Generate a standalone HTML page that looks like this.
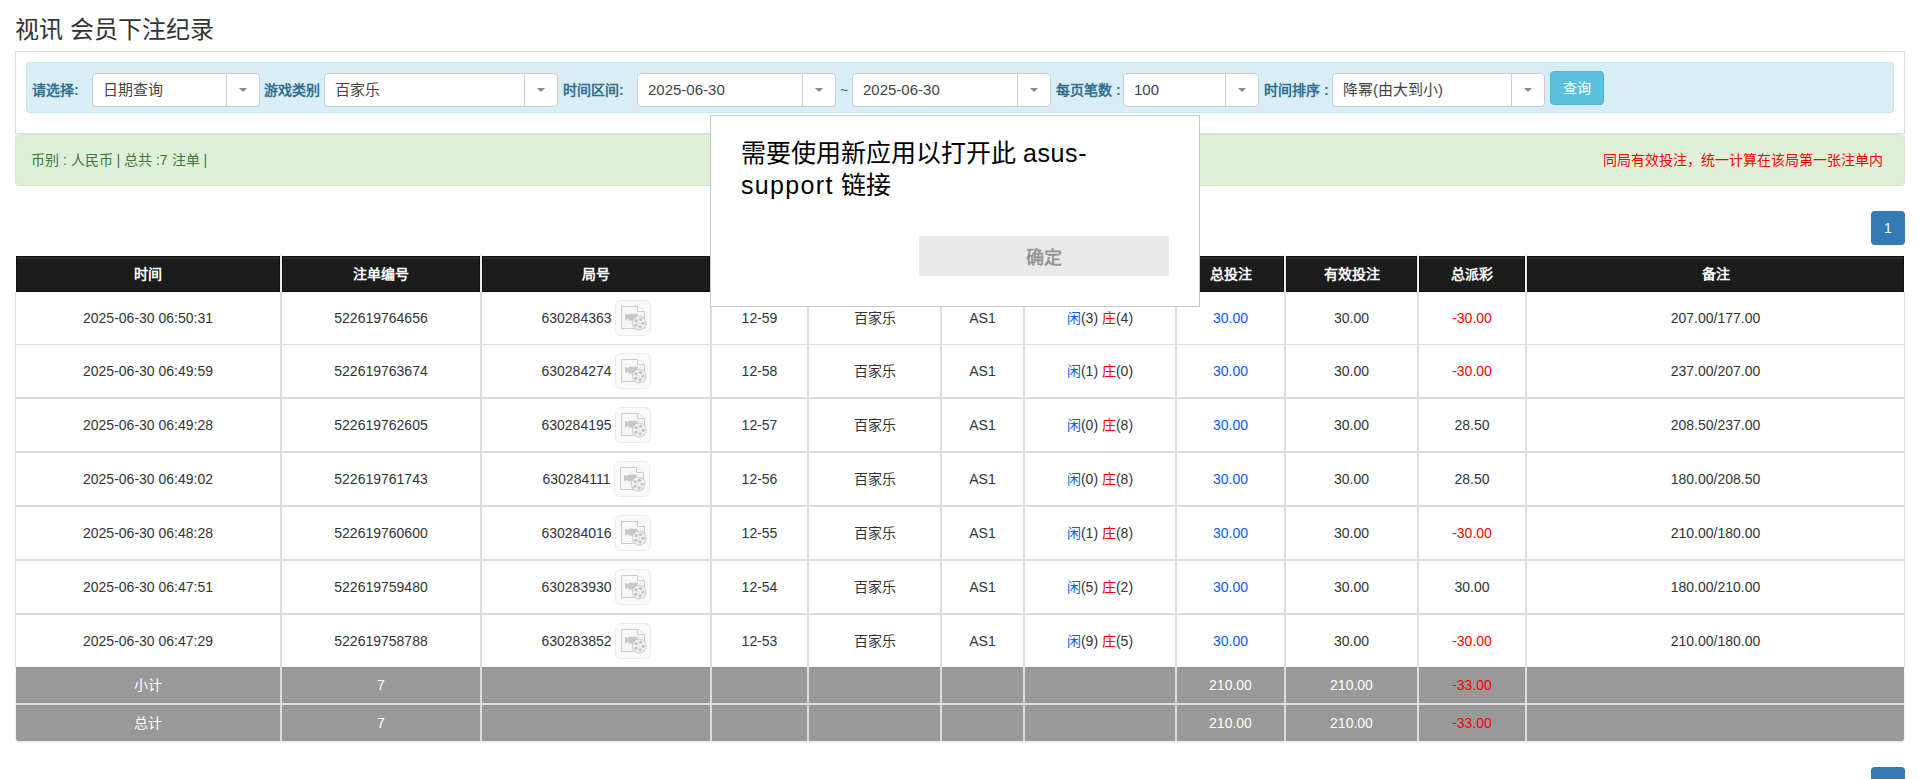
<!DOCTYPE html>
<html lang="zh-CN"><head><meta charset="utf-8"><title>视讯 会员下注纪录</title>
<style>
html,body{margin:0;padding:0;background:#fff;}
body{width:1919px;height:779px;position:relative;overflow:hidden;font-family:"Liberation Sans", sans-serif;}
</style></head><body>
<div style="position:absolute;left:15px;top:13px;width:400px;height:34px;line-height:34px;font-size:24px;color:#333;font-weight:normal;text-align:left;white-space:nowrap;">视讯 会员下注纪录</div>
<div style="position:absolute;left:15px;top:51px;width:1888px;height:81px;border:1px solid #ddd;background:#fff;"></div>
<div style="position:absolute;left:26px;top:62px;width:1866px;height:49px;border:1px solid #bce8f1;background:#d9edf7;border-radius:4px;"></div>
<div style="position:absolute;left:32px;top:80px;width:200px;height:20px;line-height:20px;font-size:14px;color:#31708f;font-weight:bold;text-align:left;white-space:nowrap;">请选择:</div>
<div style="position:absolute;left:92px;top:73px;width:166px;height:32px;border:1px solid #cccccc;background:#fff;border-radius:4px;"></div>
<div style="position:absolute;left:226px;top:74px;width:1px;height:32px;background:#cccccc;"></div>
<div style="position:absolute;left:239px;top:88px;width:0;height:0;border-style:solid;border-width:4px 4px 0 4px;border-color:#888 transparent transparent transparent;"></div>
<div style="position:absolute;left:103px;top:73px;width:128px;height:34px;line-height:34px;font-size:15px;color:#444;font-weight:normal;text-align:left;white-space:nowrap;">日期查询</div>
<div style="position:absolute;left:264px;top:80px;width:200px;height:20px;line-height:20px;font-size:14px;color:#31708f;font-weight:bold;text-align:left;white-space:nowrap;">游戏类别</div>
<div style="position:absolute;left:324px;top:73px;width:232px;height:32px;border:1px solid #cccccc;background:#fff;border-radius:4px;"></div>
<div style="position:absolute;left:524px;top:74px;width:1px;height:32px;background:#cccccc;"></div>
<div style="position:absolute;left:537px;top:88px;width:0;height:0;border-style:solid;border-width:4px 4px 0 4px;border-color:#888 transparent transparent transparent;"></div>
<div style="position:absolute;left:335px;top:73px;width:194px;height:34px;line-height:34px;font-size:15px;color:#444;font-weight:normal;text-align:left;white-space:nowrap;">百家乐</div>
<div style="position:absolute;left:563px;top:80px;width:200px;height:20px;line-height:20px;font-size:14px;color:#31708f;font-weight:bold;text-align:left;white-space:nowrap;">时间区间:</div>
<div style="position:absolute;left:637px;top:73px;width:197px;height:32px;border:1px solid #cccccc;background:#fff;border-radius:4px;"></div>
<div style="position:absolute;left:802px;top:74px;width:1px;height:32px;background:#cccccc;"></div>
<div style="position:absolute;left:815px;top:88px;width:0;height:0;border-style:solid;border-width:4px 4px 0 4px;border-color:#888 transparent transparent transparent;"></div>
<div style="position:absolute;left:648px;top:73px;width:159px;height:34px;line-height:34px;font-size:15px;color:#444;font-weight:normal;text-align:left;white-space:nowrap;">2025-06-30</div>
<div style="position:absolute;left:840px;top:80px;width:10px;height:20px;line-height:20px;font-size:14px;color:#31708f;font-weight:normal;text-align:left;white-space:nowrap;">~</div>
<div style="position:absolute;left:852px;top:73px;width:197px;height:32px;border:1px solid #cccccc;background:#fff;border-radius:4px;"></div>
<div style="position:absolute;left:1017px;top:74px;width:1px;height:32px;background:#cccccc;"></div>
<div style="position:absolute;left:1030px;top:88px;width:0;height:0;border-style:solid;border-width:4px 4px 0 4px;border-color:#888 transparent transparent transparent;"></div>
<div style="position:absolute;left:863px;top:73px;width:159px;height:34px;line-height:34px;font-size:15px;color:#444;font-weight:normal;text-align:left;white-space:nowrap;">2025-06-30</div>
<div style="position:absolute;left:1056px;top:80px;width:200px;height:20px;line-height:20px;font-size:14px;color:#31708f;font-weight:bold;text-align:left;white-space:nowrap;">每页笔数 :</div>
<div style="position:absolute;left:1123px;top:73px;width:134px;height:32px;border:1px solid #cccccc;background:#fff;border-radius:4px;"></div>
<div style="position:absolute;left:1225px;top:74px;width:1px;height:32px;background:#cccccc;"></div>
<div style="position:absolute;left:1238px;top:88px;width:0;height:0;border-style:solid;border-width:4px 4px 0 4px;border-color:#888 transparent transparent transparent;"></div>
<div style="position:absolute;left:1134px;top:73px;width:96px;height:34px;line-height:34px;font-size:15px;color:#444;font-weight:normal;text-align:left;white-space:nowrap;">100</div>
<div style="position:absolute;left:1264px;top:80px;width:200px;height:20px;line-height:20px;font-size:14px;color:#31708f;font-weight:bold;text-align:left;white-space:nowrap;">时间排序 :</div>
<div style="position:absolute;left:1332px;top:73px;width:211px;height:32px;border:1px solid #cccccc;background:#fff;border-radius:4px;"></div>
<div style="position:absolute;left:1511px;top:74px;width:1px;height:32px;background:#cccccc;"></div>
<div style="position:absolute;left:1524px;top:88px;width:0;height:0;border-style:solid;border-width:4px 4px 0 4px;border-color:#888 transparent transparent transparent;"></div>
<div style="position:absolute;left:1343px;top:73px;width:173px;height:34px;line-height:34px;font-size:15px;color:#444;font-weight:normal;text-align:left;white-space:nowrap;">降幂(由大到小)</div>
<div style="position:absolute;left:1550px;top:71px;width:52px;height:32px;border:1px solid #46b8da;background:#5bc0de;border-radius:4px;"></div>
<div style="position:absolute;left:1550px;top:71px;width:54px;height:34px;line-height:34px;font-size:14px;color:#fff;font-weight:normal;text-align:center;white-space:nowrap;">查询</div>
<div style="position:absolute;left:15px;top:134px;width:1888px;height:50px;border:1px solid #d6e9c6;background:#dff0d8;border-radius:4px;"></div>
<div style="position:absolute;left:31px;top:150px;width:400px;height:20px;line-height:20px;font-size:14px;color:#3c763d;font-weight:normal;text-align:left;white-space:nowrap;">币别 : 人民币 | 总共 :7 注单 |</div>
<div style="position:absolute;left:1400px;top:150px;width:1483px;height:20px;line-height:20px;font-size:14px;color:#f00;font-weight:normal;text-align:right;white-space:nowrap;width:483px;">同局有效投注，统一计算在该局第一张注单内</div>
<div style="position:absolute;left:1871px;top:211px;width:34px;height:34px;background:#337ab7;border-radius:4px;"></div>
<div style="position:absolute;left:1871px;top:211px;width:34px;height:34px;line-height:34px;font-size:14px;color:#fff;font-weight:normal;text-align:center;white-space:nowrap;">1</div>
<div style="position:absolute;left:1871px;top:767px;width:34px;height:34px;background:#337ab7;border-radius:4px;"></div>
<div style="position:absolute;left:1871px;top:767px;width:34px;height:34px;line-height:34px;font-size:14px;color:#fff;font-weight:normal;text-align:center;white-space:nowrap;">1</div>
<div style="position:absolute;left:16px;top:256px;width:264px;height:36px;background:#1c1c1c;"></div>
<div style="position:absolute;left:16px;top:257px;width:264px;height:2px;background:#262626;"></div>
<div style="position:absolute;left:16px;top:256px;width:264px;height:1px;background:#161616;"></div>
<div style="position:absolute;left:16px;top:291px;width:264px;height:1px;background:#111;"></div>
<div style="position:absolute;left:16px;top:256px;width:1px;height:36px;background:#121212;"></div>
<div style="position:absolute;left:279px;top:256px;width:1px;height:36px;background:#121212;"></div>
<div style="position:absolute;left:282px;top:256px;width:198px;height:36px;background:#1c1c1c;"></div>
<div style="position:absolute;left:282px;top:257px;width:198px;height:2px;background:#262626;"></div>
<div style="position:absolute;left:282px;top:256px;width:198px;height:1px;background:#161616;"></div>
<div style="position:absolute;left:282px;top:291px;width:198px;height:1px;background:#111;"></div>
<div style="position:absolute;left:282px;top:256px;width:1px;height:36px;background:#121212;"></div>
<div style="position:absolute;left:479px;top:256px;width:1px;height:36px;background:#121212;"></div>
<div style="position:absolute;left:482px;top:256px;width:228px;height:36px;background:#1c1c1c;"></div>
<div style="position:absolute;left:482px;top:257px;width:228px;height:2px;background:#262626;"></div>
<div style="position:absolute;left:482px;top:256px;width:228px;height:1px;background:#161616;"></div>
<div style="position:absolute;left:482px;top:291px;width:228px;height:1px;background:#111;"></div>
<div style="position:absolute;left:482px;top:256px;width:1px;height:36px;background:#121212;"></div>
<div style="position:absolute;left:709px;top:256px;width:1px;height:36px;background:#121212;"></div>
<div style="position:absolute;left:712px;top:256px;width:95px;height:36px;background:#1c1c1c;"></div>
<div style="position:absolute;left:712px;top:257px;width:95px;height:2px;background:#262626;"></div>
<div style="position:absolute;left:712px;top:256px;width:95px;height:1px;background:#161616;"></div>
<div style="position:absolute;left:712px;top:291px;width:95px;height:1px;background:#111;"></div>
<div style="position:absolute;left:712px;top:256px;width:1px;height:36px;background:#121212;"></div>
<div style="position:absolute;left:806px;top:256px;width:1px;height:36px;background:#121212;"></div>
<div style="position:absolute;left:809px;top:256px;width:131px;height:36px;background:#1c1c1c;"></div>
<div style="position:absolute;left:809px;top:257px;width:131px;height:2px;background:#262626;"></div>
<div style="position:absolute;left:809px;top:256px;width:131px;height:1px;background:#161616;"></div>
<div style="position:absolute;left:809px;top:291px;width:131px;height:1px;background:#111;"></div>
<div style="position:absolute;left:809px;top:256px;width:1px;height:36px;background:#121212;"></div>
<div style="position:absolute;left:939px;top:256px;width:1px;height:36px;background:#121212;"></div>
<div style="position:absolute;left:942px;top:256px;width:81px;height:36px;background:#1c1c1c;"></div>
<div style="position:absolute;left:942px;top:257px;width:81px;height:2px;background:#262626;"></div>
<div style="position:absolute;left:942px;top:256px;width:81px;height:1px;background:#161616;"></div>
<div style="position:absolute;left:942px;top:291px;width:81px;height:1px;background:#111;"></div>
<div style="position:absolute;left:942px;top:256px;width:1px;height:36px;background:#121212;"></div>
<div style="position:absolute;left:1022px;top:256px;width:1px;height:36px;background:#121212;"></div>
<div style="position:absolute;left:1025px;top:256px;width:150px;height:36px;background:#1c1c1c;"></div>
<div style="position:absolute;left:1025px;top:257px;width:150px;height:2px;background:#262626;"></div>
<div style="position:absolute;left:1025px;top:256px;width:150px;height:1px;background:#161616;"></div>
<div style="position:absolute;left:1025px;top:291px;width:150px;height:1px;background:#111;"></div>
<div style="position:absolute;left:1025px;top:256px;width:1px;height:36px;background:#121212;"></div>
<div style="position:absolute;left:1174px;top:256px;width:1px;height:36px;background:#121212;"></div>
<div style="position:absolute;left:1177px;top:256px;width:107px;height:36px;background:#1c1c1c;"></div>
<div style="position:absolute;left:1177px;top:257px;width:107px;height:2px;background:#262626;"></div>
<div style="position:absolute;left:1177px;top:256px;width:107px;height:1px;background:#161616;"></div>
<div style="position:absolute;left:1177px;top:291px;width:107px;height:1px;background:#111;"></div>
<div style="position:absolute;left:1177px;top:256px;width:1px;height:36px;background:#121212;"></div>
<div style="position:absolute;left:1283px;top:256px;width:1px;height:36px;background:#121212;"></div>
<div style="position:absolute;left:1286px;top:256px;width:131px;height:36px;background:#1c1c1c;"></div>
<div style="position:absolute;left:1286px;top:257px;width:131px;height:2px;background:#262626;"></div>
<div style="position:absolute;left:1286px;top:256px;width:131px;height:1px;background:#161616;"></div>
<div style="position:absolute;left:1286px;top:291px;width:131px;height:1px;background:#111;"></div>
<div style="position:absolute;left:1286px;top:256px;width:1px;height:36px;background:#121212;"></div>
<div style="position:absolute;left:1416px;top:256px;width:1px;height:36px;background:#121212;"></div>
<div style="position:absolute;left:1419px;top:256px;width:106px;height:36px;background:#1c1c1c;"></div>
<div style="position:absolute;left:1419px;top:257px;width:106px;height:2px;background:#262626;"></div>
<div style="position:absolute;left:1419px;top:256px;width:106px;height:1px;background:#161616;"></div>
<div style="position:absolute;left:1419px;top:291px;width:106px;height:1px;background:#111;"></div>
<div style="position:absolute;left:1419px;top:256px;width:1px;height:36px;background:#121212;"></div>
<div style="position:absolute;left:1524px;top:256px;width:1px;height:36px;background:#121212;"></div>
<div style="position:absolute;left:1527px;top:256px;width:377px;height:36px;background:#1c1c1c;"></div>
<div style="position:absolute;left:1527px;top:257px;width:377px;height:2px;background:#262626;"></div>
<div style="position:absolute;left:1527px;top:256px;width:377px;height:1px;background:#161616;"></div>
<div style="position:absolute;left:1527px;top:291px;width:377px;height:1px;background:#111;"></div>
<div style="position:absolute;left:1527px;top:256px;width:1px;height:36px;background:#121212;"></div>
<div style="position:absolute;left:1903px;top:256px;width:1px;height:36px;background:#121212;"></div>
<div style="position:absolute;left:16px;top:256px;width:264px;height:36px;line-height:36px;font-size:14px;color:#fff;font-weight:bold;text-align:center;white-space:nowrap;">时间</div>
<div style="position:absolute;left:282px;top:256px;width:198px;height:36px;line-height:36px;font-size:14px;color:#fff;font-weight:bold;text-align:center;white-space:nowrap;">注单编号</div>
<div style="position:absolute;left:482px;top:256px;width:228px;height:36px;line-height:36px;font-size:14px;color:#fff;font-weight:bold;text-align:center;white-space:nowrap;">局号</div>
<div style="position:absolute;left:712px;top:256px;width:95px;height:36px;line-height:36px;font-size:14px;color:#fff;font-weight:bold;text-align:center;white-space:nowrap;">场次</div>
<div style="position:absolute;left:809px;top:256px;width:131px;height:36px;line-height:36px;font-size:14px;color:#fff;font-weight:bold;text-align:center;white-space:nowrap;">游戏</div>
<div style="position:absolute;left:942px;top:256px;width:81px;height:36px;line-height:36px;font-size:14px;color:#fff;font-weight:bold;text-align:center;white-space:nowrap;">桌号</div>
<div style="position:absolute;left:1025px;top:256px;width:150px;height:36px;line-height:36px;font-size:14px;color:#fff;font-weight:bold;text-align:center;white-space:nowrap;">结果</div>
<div style="position:absolute;left:1177px;top:256px;width:107px;height:36px;line-height:36px;font-size:14px;color:#fff;font-weight:bold;text-align:center;white-space:nowrap;">总投注</div>
<div style="position:absolute;left:1286px;top:256px;width:131px;height:36px;line-height:36px;font-size:14px;color:#fff;font-weight:bold;text-align:center;white-space:nowrap;">有效投注</div>
<div style="position:absolute;left:1419px;top:256px;width:106px;height:36px;line-height:36px;font-size:14px;color:#fff;font-weight:bold;text-align:center;white-space:nowrap;">总派彩</div>
<div style="position:absolute;left:1527px;top:256px;width:377px;height:36px;line-height:36px;font-size:14px;color:#fff;font-weight:bold;text-align:center;white-space:nowrap;">备注</div>
<div style="position:absolute;left:280px;top:255px;width:2px;height:37px;background:#ececec;"></div>
<div style="position:absolute;left:480px;top:255px;width:2px;height:37px;background:#ececec;"></div>
<div style="position:absolute;left:710px;top:255px;width:2px;height:37px;background:#ececec;"></div>
<div style="position:absolute;left:807px;top:255px;width:2px;height:37px;background:#ececec;"></div>
<div style="position:absolute;left:940px;top:255px;width:2px;height:37px;background:#ececec;"></div>
<div style="position:absolute;left:1023px;top:255px;width:2px;height:37px;background:#ececec;"></div>
<div style="position:absolute;left:1175px;top:255px;width:2px;height:37px;background:#ececec;"></div>
<div style="position:absolute;left:1284px;top:255px;width:2px;height:37px;background:#ececec;"></div>
<div style="position:absolute;left:1417px;top:255px;width:2px;height:37px;background:#ececec;"></div>
<div style="position:absolute;left:1525px;top:255px;width:2px;height:37px;background:#ececec;"></div>
<div style="position:absolute;left:15px;top:292px;width:1890px;height:52px;background:#fff;"></div>
<div style="position:absolute;left:16px;top:292px;width:264px;height:52px;line-height:52px;font-size:14px;color:#333;font-weight:normal;text-align:center;white-space:nowrap;">2025-06-30 06:50:31</div>
<div style="position:absolute;left:282px;top:292px;width:198px;height:52px;line-height:52px;font-size:14px;color:#333;font-weight:normal;text-align:center;white-space:nowrap;">522619764656</div>
<div style="position:absolute;left:482px;top:292px;width:228px;height:52px;display:flex;align-items:center;justify-content:center;"><span style="font-size:14px;color:#333;line-height:20px">630284363</span><span style="display:inline-block;position:relative;width:36px;height:36px;margin-left:3px;top:0px"><svg width="36" height="36" viewBox="0 0 36 36" style="position:absolute;left:0;top:0"><rect x="0.5" y="0.5" width="35" height="35" rx="5" fill="#f9f9f9" stroke="#ebebeb"/><path d="M6.5 6.5 H22.5 L29.5 11.5 V28.5 H6.5 Z" fill="#f6f6f6" stroke="#cccccc"/><path d="M22.5 6.5 V11.5 H29.5" fill="#fdfdfd" stroke="#cccccc"/><path d="M10 13.8 V20.4 L13.5 18.6 V20.4 H22.7 V13.8 H13.5 V15.6 Z" fill="#c6c6c6"/><circle cx="24.2" cy="23.1" r="7" fill="#efefef" stroke="#cbcbcb"/><circle cx="25.53" cy="19.44" r="1.6" fill="#c4c4c4"/><circle cx="28.10" cy="23.24" r="1.6" fill="#c4c4c4"/><circle cx="25.27" cy="26.85" r="1.6" fill="#c4c4c4"/><circle cx="20.97" cy="25.28" r="1.6" fill="#c4c4c4"/><circle cx="21.13" cy="20.70" r="1.6" fill="#c4c4c4"/><circle cx="24.2" cy="23.1" r="0.6" fill="#c4c4c4"/></svg></span></div>
<div style="position:absolute;left:712px;top:292px;width:95px;height:52px;line-height:52px;font-size:14px;color:#333;font-weight:normal;text-align:center;white-space:nowrap;">12-59</div>
<div style="position:absolute;left:809px;top:292px;width:131px;height:52px;line-height:52px;font-size:14px;color:#333;font-weight:normal;text-align:center;white-space:nowrap;">百家乐</div>
<div style="position:absolute;left:942px;top:292px;width:81px;height:52px;line-height:52px;font-size:14px;color:#333;font-weight:normal;text-align:center;white-space:nowrap;">AS1</div>
<div style="position:absolute;left:1025px;top:292px;width:150px;height:52px;line-height:52px;font-size:14px;color:#333;font-weight:normal;text-align:center;white-space:nowrap;"><span style="color:#0060ff">闲</span>(3) <span style="color:#f00">庄</span>(4)</div>
<div style="position:absolute;left:1177px;top:292px;width:107px;height:52px;line-height:52px;font-size:14px;color:#0060ff;font-weight:normal;text-align:center;white-space:nowrap;">30.00</div>
<div style="position:absolute;left:1286px;top:292px;width:131px;height:52px;line-height:52px;font-size:14px;color:#333;font-weight:normal;text-align:center;white-space:nowrap;">30.00</div>
<div style="position:absolute;left:1419px;top:292px;width:106px;height:52px;line-height:52px;font-size:14px;color:#f00;font-weight:normal;text-align:center;white-space:nowrap;">-30.00</div>
<div style="position:absolute;left:1527px;top:292px;width:377px;height:52px;line-height:52px;font-size:14px;color:#333;font-weight:normal;text-align:center;white-space:nowrap;">207.00/177.00</div>
<div style="position:absolute;left:15px;top:344px;width:1890px;height:1px;background:#ddd;"></div>
<div style="position:absolute;left:280px;top:292px;width:2px;height:53px;background:#ddd;"></div>
<div style="position:absolute;left:480px;top:292px;width:2px;height:53px;background:#ddd;"></div>
<div style="position:absolute;left:710px;top:292px;width:2px;height:53px;background:#ddd;"></div>
<div style="position:absolute;left:807px;top:292px;width:2px;height:53px;background:#ddd;"></div>
<div style="position:absolute;left:940px;top:292px;width:2px;height:53px;background:#ddd;"></div>
<div style="position:absolute;left:1023px;top:292px;width:2px;height:53px;background:#ddd;"></div>
<div style="position:absolute;left:1175px;top:292px;width:2px;height:53px;background:#ddd;"></div>
<div style="position:absolute;left:1284px;top:292px;width:2px;height:53px;background:#ddd;"></div>
<div style="position:absolute;left:1417px;top:292px;width:2px;height:53px;background:#ddd;"></div>
<div style="position:absolute;left:1525px;top:292px;width:2px;height:53px;background:#ddd;"></div>
<div style="position:absolute;left:15px;top:345px;width:1890px;height:52px;background:#fff;"></div>
<div style="position:absolute;left:16px;top:345px;width:264px;height:52px;line-height:52px;font-size:14px;color:#333;font-weight:normal;text-align:center;white-space:nowrap;">2025-06-30 06:49:59</div>
<div style="position:absolute;left:282px;top:345px;width:198px;height:52px;line-height:52px;font-size:14px;color:#333;font-weight:normal;text-align:center;white-space:nowrap;">522619763674</div>
<div style="position:absolute;left:482px;top:345px;width:228px;height:52px;display:flex;align-items:center;justify-content:center;"><span style="font-size:14px;color:#333;line-height:20px">630284274</span><span style="display:inline-block;position:relative;width:36px;height:36px;margin-left:3px;top:0px"><svg width="36" height="36" viewBox="0 0 36 36" style="position:absolute;left:0;top:0"><rect x="0.5" y="0.5" width="35" height="35" rx="5" fill="#f9f9f9" stroke="#ebebeb"/><path d="M6.5 6.5 H22.5 L29.5 11.5 V28.5 H6.5 Z" fill="#f6f6f6" stroke="#cccccc"/><path d="M22.5 6.5 V11.5 H29.5" fill="#fdfdfd" stroke="#cccccc"/><path d="M10 13.8 V20.4 L13.5 18.6 V20.4 H22.7 V13.8 H13.5 V15.6 Z" fill="#c6c6c6"/><circle cx="24.2" cy="23.1" r="7" fill="#efefef" stroke="#cbcbcb"/><circle cx="25.53" cy="19.44" r="1.6" fill="#c4c4c4"/><circle cx="28.10" cy="23.24" r="1.6" fill="#c4c4c4"/><circle cx="25.27" cy="26.85" r="1.6" fill="#c4c4c4"/><circle cx="20.97" cy="25.28" r="1.6" fill="#c4c4c4"/><circle cx="21.13" cy="20.70" r="1.6" fill="#c4c4c4"/><circle cx="24.2" cy="23.1" r="0.6" fill="#c4c4c4"/></svg></span></div>
<div style="position:absolute;left:712px;top:345px;width:95px;height:52px;line-height:52px;font-size:14px;color:#333;font-weight:normal;text-align:center;white-space:nowrap;">12-58</div>
<div style="position:absolute;left:809px;top:345px;width:131px;height:52px;line-height:52px;font-size:14px;color:#333;font-weight:normal;text-align:center;white-space:nowrap;">百家乐</div>
<div style="position:absolute;left:942px;top:345px;width:81px;height:52px;line-height:52px;font-size:14px;color:#333;font-weight:normal;text-align:center;white-space:nowrap;">AS1</div>
<div style="position:absolute;left:1025px;top:345px;width:150px;height:52px;line-height:52px;font-size:14px;color:#333;font-weight:normal;text-align:center;white-space:nowrap;"><span style="color:#0060ff">闲</span>(1) <span style="color:#f00">庄</span>(0)</div>
<div style="position:absolute;left:1177px;top:345px;width:107px;height:52px;line-height:52px;font-size:14px;color:#0060ff;font-weight:normal;text-align:center;white-space:nowrap;">30.00</div>
<div style="position:absolute;left:1286px;top:345px;width:131px;height:52px;line-height:52px;font-size:14px;color:#333;font-weight:normal;text-align:center;white-space:nowrap;">30.00</div>
<div style="position:absolute;left:1419px;top:345px;width:106px;height:52px;line-height:52px;font-size:14px;color:#f00;font-weight:normal;text-align:center;white-space:nowrap;">-30.00</div>
<div style="position:absolute;left:1527px;top:345px;width:377px;height:52px;line-height:52px;font-size:14px;color:#333;font-weight:normal;text-align:center;white-space:nowrap;">237.00/207.00</div>
<div style="position:absolute;left:15px;top:397px;width:1890px;height:2px;background:#ddd;"></div>
<div style="position:absolute;left:280px;top:345px;width:2px;height:54px;background:#ddd;"></div>
<div style="position:absolute;left:480px;top:345px;width:2px;height:54px;background:#ddd;"></div>
<div style="position:absolute;left:710px;top:345px;width:2px;height:54px;background:#ddd;"></div>
<div style="position:absolute;left:807px;top:345px;width:2px;height:54px;background:#ddd;"></div>
<div style="position:absolute;left:940px;top:345px;width:2px;height:54px;background:#ddd;"></div>
<div style="position:absolute;left:1023px;top:345px;width:2px;height:54px;background:#ddd;"></div>
<div style="position:absolute;left:1175px;top:345px;width:2px;height:54px;background:#ddd;"></div>
<div style="position:absolute;left:1284px;top:345px;width:2px;height:54px;background:#ddd;"></div>
<div style="position:absolute;left:1417px;top:345px;width:2px;height:54px;background:#ddd;"></div>
<div style="position:absolute;left:1525px;top:345px;width:2px;height:54px;background:#ddd;"></div>
<div style="position:absolute;left:15px;top:399px;width:1890px;height:52px;background:#fff;"></div>
<div style="position:absolute;left:16px;top:399px;width:264px;height:52px;line-height:52px;font-size:14px;color:#333;font-weight:normal;text-align:center;white-space:nowrap;">2025-06-30 06:49:28</div>
<div style="position:absolute;left:282px;top:399px;width:198px;height:52px;line-height:52px;font-size:14px;color:#333;font-weight:normal;text-align:center;white-space:nowrap;">522619762605</div>
<div style="position:absolute;left:482px;top:399px;width:228px;height:52px;display:flex;align-items:center;justify-content:center;"><span style="font-size:14px;color:#333;line-height:20px">630284195</span><span style="display:inline-block;position:relative;width:36px;height:36px;margin-left:3px;top:0px"><svg width="36" height="36" viewBox="0 0 36 36" style="position:absolute;left:0;top:0"><rect x="0.5" y="0.5" width="35" height="35" rx="5" fill="#f9f9f9" stroke="#ebebeb"/><path d="M6.5 6.5 H22.5 L29.5 11.5 V28.5 H6.5 Z" fill="#f6f6f6" stroke="#cccccc"/><path d="M22.5 6.5 V11.5 H29.5" fill="#fdfdfd" stroke="#cccccc"/><path d="M10 13.8 V20.4 L13.5 18.6 V20.4 H22.7 V13.8 H13.5 V15.6 Z" fill="#c6c6c6"/><circle cx="24.2" cy="23.1" r="7" fill="#efefef" stroke="#cbcbcb"/><circle cx="25.53" cy="19.44" r="1.6" fill="#c4c4c4"/><circle cx="28.10" cy="23.24" r="1.6" fill="#c4c4c4"/><circle cx="25.27" cy="26.85" r="1.6" fill="#c4c4c4"/><circle cx="20.97" cy="25.28" r="1.6" fill="#c4c4c4"/><circle cx="21.13" cy="20.70" r="1.6" fill="#c4c4c4"/><circle cx="24.2" cy="23.1" r="0.6" fill="#c4c4c4"/></svg></span></div>
<div style="position:absolute;left:712px;top:399px;width:95px;height:52px;line-height:52px;font-size:14px;color:#333;font-weight:normal;text-align:center;white-space:nowrap;">12-57</div>
<div style="position:absolute;left:809px;top:399px;width:131px;height:52px;line-height:52px;font-size:14px;color:#333;font-weight:normal;text-align:center;white-space:nowrap;">百家乐</div>
<div style="position:absolute;left:942px;top:399px;width:81px;height:52px;line-height:52px;font-size:14px;color:#333;font-weight:normal;text-align:center;white-space:nowrap;">AS1</div>
<div style="position:absolute;left:1025px;top:399px;width:150px;height:52px;line-height:52px;font-size:14px;color:#333;font-weight:normal;text-align:center;white-space:nowrap;"><span style="color:#0060ff">闲</span>(0) <span style="color:#f00">庄</span>(8)</div>
<div style="position:absolute;left:1177px;top:399px;width:107px;height:52px;line-height:52px;font-size:14px;color:#0060ff;font-weight:normal;text-align:center;white-space:nowrap;">30.00</div>
<div style="position:absolute;left:1286px;top:399px;width:131px;height:52px;line-height:52px;font-size:14px;color:#333;font-weight:normal;text-align:center;white-space:nowrap;">30.00</div>
<div style="position:absolute;left:1419px;top:399px;width:106px;height:52px;line-height:52px;font-size:14px;color:#333;font-weight:normal;text-align:center;white-space:nowrap;">28.50</div>
<div style="position:absolute;left:1527px;top:399px;width:377px;height:52px;line-height:52px;font-size:14px;color:#333;font-weight:normal;text-align:center;white-space:nowrap;">208.50/237.00</div>
<div style="position:absolute;left:15px;top:451px;width:1890px;height:2px;background:#ddd;"></div>
<div style="position:absolute;left:280px;top:399px;width:2px;height:54px;background:#ddd;"></div>
<div style="position:absolute;left:480px;top:399px;width:2px;height:54px;background:#ddd;"></div>
<div style="position:absolute;left:710px;top:399px;width:2px;height:54px;background:#ddd;"></div>
<div style="position:absolute;left:807px;top:399px;width:2px;height:54px;background:#ddd;"></div>
<div style="position:absolute;left:940px;top:399px;width:2px;height:54px;background:#ddd;"></div>
<div style="position:absolute;left:1023px;top:399px;width:2px;height:54px;background:#ddd;"></div>
<div style="position:absolute;left:1175px;top:399px;width:2px;height:54px;background:#ddd;"></div>
<div style="position:absolute;left:1284px;top:399px;width:2px;height:54px;background:#ddd;"></div>
<div style="position:absolute;left:1417px;top:399px;width:2px;height:54px;background:#ddd;"></div>
<div style="position:absolute;left:1525px;top:399px;width:2px;height:54px;background:#ddd;"></div>
<div style="position:absolute;left:15px;top:453px;width:1890px;height:52px;background:#fff;"></div>
<div style="position:absolute;left:16px;top:453px;width:264px;height:52px;line-height:52px;font-size:14px;color:#333;font-weight:normal;text-align:center;white-space:nowrap;">2025-06-30 06:49:02</div>
<div style="position:absolute;left:282px;top:453px;width:198px;height:52px;line-height:52px;font-size:14px;color:#333;font-weight:normal;text-align:center;white-space:nowrap;">522619761743</div>
<div style="position:absolute;left:482px;top:453px;width:228px;height:52px;display:flex;align-items:center;justify-content:center;"><span style="font-size:14px;color:#333;line-height:20px">630284111</span><span style="display:inline-block;position:relative;width:36px;height:36px;margin-left:3px;top:0px"><svg width="36" height="36" viewBox="0 0 36 36" style="position:absolute;left:0;top:0"><rect x="0.5" y="0.5" width="35" height="35" rx="5" fill="#f9f9f9" stroke="#ebebeb"/><path d="M6.5 6.5 H22.5 L29.5 11.5 V28.5 H6.5 Z" fill="#f6f6f6" stroke="#cccccc"/><path d="M22.5 6.5 V11.5 H29.5" fill="#fdfdfd" stroke="#cccccc"/><path d="M10 13.8 V20.4 L13.5 18.6 V20.4 H22.7 V13.8 H13.5 V15.6 Z" fill="#c6c6c6"/><circle cx="24.2" cy="23.1" r="7" fill="#efefef" stroke="#cbcbcb"/><circle cx="25.53" cy="19.44" r="1.6" fill="#c4c4c4"/><circle cx="28.10" cy="23.24" r="1.6" fill="#c4c4c4"/><circle cx="25.27" cy="26.85" r="1.6" fill="#c4c4c4"/><circle cx="20.97" cy="25.28" r="1.6" fill="#c4c4c4"/><circle cx="21.13" cy="20.70" r="1.6" fill="#c4c4c4"/><circle cx="24.2" cy="23.1" r="0.6" fill="#c4c4c4"/></svg></span></div>
<div style="position:absolute;left:712px;top:453px;width:95px;height:52px;line-height:52px;font-size:14px;color:#333;font-weight:normal;text-align:center;white-space:nowrap;">12-56</div>
<div style="position:absolute;left:809px;top:453px;width:131px;height:52px;line-height:52px;font-size:14px;color:#333;font-weight:normal;text-align:center;white-space:nowrap;">百家乐</div>
<div style="position:absolute;left:942px;top:453px;width:81px;height:52px;line-height:52px;font-size:14px;color:#333;font-weight:normal;text-align:center;white-space:nowrap;">AS1</div>
<div style="position:absolute;left:1025px;top:453px;width:150px;height:52px;line-height:52px;font-size:14px;color:#333;font-weight:normal;text-align:center;white-space:nowrap;"><span style="color:#0060ff">闲</span>(0) <span style="color:#f00">庄</span>(8)</div>
<div style="position:absolute;left:1177px;top:453px;width:107px;height:52px;line-height:52px;font-size:14px;color:#0060ff;font-weight:normal;text-align:center;white-space:nowrap;">30.00</div>
<div style="position:absolute;left:1286px;top:453px;width:131px;height:52px;line-height:52px;font-size:14px;color:#333;font-weight:normal;text-align:center;white-space:nowrap;">30.00</div>
<div style="position:absolute;left:1419px;top:453px;width:106px;height:52px;line-height:52px;font-size:14px;color:#333;font-weight:normal;text-align:center;white-space:nowrap;">28.50</div>
<div style="position:absolute;left:1527px;top:453px;width:377px;height:52px;line-height:52px;font-size:14px;color:#333;font-weight:normal;text-align:center;white-space:nowrap;">180.00/208.50</div>
<div style="position:absolute;left:15px;top:505px;width:1890px;height:2px;background:#ddd;"></div>
<div style="position:absolute;left:280px;top:453px;width:2px;height:54px;background:#ddd;"></div>
<div style="position:absolute;left:480px;top:453px;width:2px;height:54px;background:#ddd;"></div>
<div style="position:absolute;left:710px;top:453px;width:2px;height:54px;background:#ddd;"></div>
<div style="position:absolute;left:807px;top:453px;width:2px;height:54px;background:#ddd;"></div>
<div style="position:absolute;left:940px;top:453px;width:2px;height:54px;background:#ddd;"></div>
<div style="position:absolute;left:1023px;top:453px;width:2px;height:54px;background:#ddd;"></div>
<div style="position:absolute;left:1175px;top:453px;width:2px;height:54px;background:#ddd;"></div>
<div style="position:absolute;left:1284px;top:453px;width:2px;height:54px;background:#ddd;"></div>
<div style="position:absolute;left:1417px;top:453px;width:2px;height:54px;background:#ddd;"></div>
<div style="position:absolute;left:1525px;top:453px;width:2px;height:54px;background:#ddd;"></div>
<div style="position:absolute;left:15px;top:507px;width:1890px;height:52px;background:#fff;"></div>
<div style="position:absolute;left:16px;top:507px;width:264px;height:52px;line-height:52px;font-size:14px;color:#333;font-weight:normal;text-align:center;white-space:nowrap;">2025-06-30 06:48:28</div>
<div style="position:absolute;left:282px;top:507px;width:198px;height:52px;line-height:52px;font-size:14px;color:#333;font-weight:normal;text-align:center;white-space:nowrap;">522619760600</div>
<div style="position:absolute;left:482px;top:507px;width:228px;height:52px;display:flex;align-items:center;justify-content:center;"><span style="font-size:14px;color:#333;line-height:20px">630284016</span><span style="display:inline-block;position:relative;width:36px;height:36px;margin-left:3px;top:0px"><svg width="36" height="36" viewBox="0 0 36 36" style="position:absolute;left:0;top:0"><rect x="0.5" y="0.5" width="35" height="35" rx="5" fill="#f9f9f9" stroke="#ebebeb"/><path d="M6.5 6.5 H22.5 L29.5 11.5 V28.5 H6.5 Z" fill="#f6f6f6" stroke="#cccccc"/><path d="M22.5 6.5 V11.5 H29.5" fill="#fdfdfd" stroke="#cccccc"/><path d="M10 13.8 V20.4 L13.5 18.6 V20.4 H22.7 V13.8 H13.5 V15.6 Z" fill="#c6c6c6"/><circle cx="24.2" cy="23.1" r="7" fill="#efefef" stroke="#cbcbcb"/><circle cx="25.53" cy="19.44" r="1.6" fill="#c4c4c4"/><circle cx="28.10" cy="23.24" r="1.6" fill="#c4c4c4"/><circle cx="25.27" cy="26.85" r="1.6" fill="#c4c4c4"/><circle cx="20.97" cy="25.28" r="1.6" fill="#c4c4c4"/><circle cx="21.13" cy="20.70" r="1.6" fill="#c4c4c4"/><circle cx="24.2" cy="23.1" r="0.6" fill="#c4c4c4"/></svg></span></div>
<div style="position:absolute;left:712px;top:507px;width:95px;height:52px;line-height:52px;font-size:14px;color:#333;font-weight:normal;text-align:center;white-space:nowrap;">12-55</div>
<div style="position:absolute;left:809px;top:507px;width:131px;height:52px;line-height:52px;font-size:14px;color:#333;font-weight:normal;text-align:center;white-space:nowrap;">百家乐</div>
<div style="position:absolute;left:942px;top:507px;width:81px;height:52px;line-height:52px;font-size:14px;color:#333;font-weight:normal;text-align:center;white-space:nowrap;">AS1</div>
<div style="position:absolute;left:1025px;top:507px;width:150px;height:52px;line-height:52px;font-size:14px;color:#333;font-weight:normal;text-align:center;white-space:nowrap;"><span style="color:#0060ff">闲</span>(1) <span style="color:#f00">庄</span>(8)</div>
<div style="position:absolute;left:1177px;top:507px;width:107px;height:52px;line-height:52px;font-size:14px;color:#0060ff;font-weight:normal;text-align:center;white-space:nowrap;">30.00</div>
<div style="position:absolute;left:1286px;top:507px;width:131px;height:52px;line-height:52px;font-size:14px;color:#333;font-weight:normal;text-align:center;white-space:nowrap;">30.00</div>
<div style="position:absolute;left:1419px;top:507px;width:106px;height:52px;line-height:52px;font-size:14px;color:#f00;font-weight:normal;text-align:center;white-space:nowrap;">-30.00</div>
<div style="position:absolute;left:1527px;top:507px;width:377px;height:52px;line-height:52px;font-size:14px;color:#333;font-weight:normal;text-align:center;white-space:nowrap;">210.00/180.00</div>
<div style="position:absolute;left:15px;top:559px;width:1890px;height:2px;background:#ddd;"></div>
<div style="position:absolute;left:280px;top:507px;width:2px;height:54px;background:#ddd;"></div>
<div style="position:absolute;left:480px;top:507px;width:2px;height:54px;background:#ddd;"></div>
<div style="position:absolute;left:710px;top:507px;width:2px;height:54px;background:#ddd;"></div>
<div style="position:absolute;left:807px;top:507px;width:2px;height:54px;background:#ddd;"></div>
<div style="position:absolute;left:940px;top:507px;width:2px;height:54px;background:#ddd;"></div>
<div style="position:absolute;left:1023px;top:507px;width:2px;height:54px;background:#ddd;"></div>
<div style="position:absolute;left:1175px;top:507px;width:2px;height:54px;background:#ddd;"></div>
<div style="position:absolute;left:1284px;top:507px;width:2px;height:54px;background:#ddd;"></div>
<div style="position:absolute;left:1417px;top:507px;width:2px;height:54px;background:#ddd;"></div>
<div style="position:absolute;left:1525px;top:507px;width:2px;height:54px;background:#ddd;"></div>
<div style="position:absolute;left:15px;top:561px;width:1890px;height:52px;background:#fff;"></div>
<div style="position:absolute;left:16px;top:561px;width:264px;height:52px;line-height:52px;font-size:14px;color:#333;font-weight:normal;text-align:center;white-space:nowrap;">2025-06-30 06:47:51</div>
<div style="position:absolute;left:282px;top:561px;width:198px;height:52px;line-height:52px;font-size:14px;color:#333;font-weight:normal;text-align:center;white-space:nowrap;">522619759480</div>
<div style="position:absolute;left:482px;top:561px;width:228px;height:52px;display:flex;align-items:center;justify-content:center;"><span style="font-size:14px;color:#333;line-height:20px">630283930</span><span style="display:inline-block;position:relative;width:36px;height:36px;margin-left:3px;top:0px"><svg width="36" height="36" viewBox="0 0 36 36" style="position:absolute;left:0;top:0"><rect x="0.5" y="0.5" width="35" height="35" rx="5" fill="#f9f9f9" stroke="#ebebeb"/><path d="M6.5 6.5 H22.5 L29.5 11.5 V28.5 H6.5 Z" fill="#f6f6f6" stroke="#cccccc"/><path d="M22.5 6.5 V11.5 H29.5" fill="#fdfdfd" stroke="#cccccc"/><path d="M10 13.8 V20.4 L13.5 18.6 V20.4 H22.7 V13.8 H13.5 V15.6 Z" fill="#c6c6c6"/><circle cx="24.2" cy="23.1" r="7" fill="#efefef" stroke="#cbcbcb"/><circle cx="25.53" cy="19.44" r="1.6" fill="#c4c4c4"/><circle cx="28.10" cy="23.24" r="1.6" fill="#c4c4c4"/><circle cx="25.27" cy="26.85" r="1.6" fill="#c4c4c4"/><circle cx="20.97" cy="25.28" r="1.6" fill="#c4c4c4"/><circle cx="21.13" cy="20.70" r="1.6" fill="#c4c4c4"/><circle cx="24.2" cy="23.1" r="0.6" fill="#c4c4c4"/></svg></span></div>
<div style="position:absolute;left:712px;top:561px;width:95px;height:52px;line-height:52px;font-size:14px;color:#333;font-weight:normal;text-align:center;white-space:nowrap;">12-54</div>
<div style="position:absolute;left:809px;top:561px;width:131px;height:52px;line-height:52px;font-size:14px;color:#333;font-weight:normal;text-align:center;white-space:nowrap;">百家乐</div>
<div style="position:absolute;left:942px;top:561px;width:81px;height:52px;line-height:52px;font-size:14px;color:#333;font-weight:normal;text-align:center;white-space:nowrap;">AS1</div>
<div style="position:absolute;left:1025px;top:561px;width:150px;height:52px;line-height:52px;font-size:14px;color:#333;font-weight:normal;text-align:center;white-space:nowrap;"><span style="color:#0060ff">闲</span>(5) <span style="color:#f00">庄</span>(2)</div>
<div style="position:absolute;left:1177px;top:561px;width:107px;height:52px;line-height:52px;font-size:14px;color:#0060ff;font-weight:normal;text-align:center;white-space:nowrap;">30.00</div>
<div style="position:absolute;left:1286px;top:561px;width:131px;height:52px;line-height:52px;font-size:14px;color:#333;font-weight:normal;text-align:center;white-space:nowrap;">30.00</div>
<div style="position:absolute;left:1419px;top:561px;width:106px;height:52px;line-height:52px;font-size:14px;color:#333;font-weight:normal;text-align:center;white-space:nowrap;">30.00</div>
<div style="position:absolute;left:1527px;top:561px;width:377px;height:52px;line-height:52px;font-size:14px;color:#333;font-weight:normal;text-align:center;white-space:nowrap;">180.00/210.00</div>
<div style="position:absolute;left:15px;top:613px;width:1890px;height:2px;background:#ddd;"></div>
<div style="position:absolute;left:280px;top:561px;width:2px;height:54px;background:#ddd;"></div>
<div style="position:absolute;left:480px;top:561px;width:2px;height:54px;background:#ddd;"></div>
<div style="position:absolute;left:710px;top:561px;width:2px;height:54px;background:#ddd;"></div>
<div style="position:absolute;left:807px;top:561px;width:2px;height:54px;background:#ddd;"></div>
<div style="position:absolute;left:940px;top:561px;width:2px;height:54px;background:#ddd;"></div>
<div style="position:absolute;left:1023px;top:561px;width:2px;height:54px;background:#ddd;"></div>
<div style="position:absolute;left:1175px;top:561px;width:2px;height:54px;background:#ddd;"></div>
<div style="position:absolute;left:1284px;top:561px;width:2px;height:54px;background:#ddd;"></div>
<div style="position:absolute;left:1417px;top:561px;width:2px;height:54px;background:#ddd;"></div>
<div style="position:absolute;left:1525px;top:561px;width:2px;height:54px;background:#ddd;"></div>
<div style="position:absolute;left:15px;top:615px;width:1890px;height:52px;background:#fff;"></div>
<div style="position:absolute;left:16px;top:615px;width:264px;height:52px;line-height:52px;font-size:14px;color:#333;font-weight:normal;text-align:center;white-space:nowrap;">2025-06-30 06:47:29</div>
<div style="position:absolute;left:282px;top:615px;width:198px;height:52px;line-height:52px;font-size:14px;color:#333;font-weight:normal;text-align:center;white-space:nowrap;">522619758788</div>
<div style="position:absolute;left:482px;top:615px;width:228px;height:52px;display:flex;align-items:center;justify-content:center;"><span style="font-size:14px;color:#333;line-height:20px">630283852</span><span style="display:inline-block;position:relative;width:36px;height:36px;margin-left:3px;top:0px"><svg width="36" height="36" viewBox="0 0 36 36" style="position:absolute;left:0;top:0"><rect x="0.5" y="0.5" width="35" height="35" rx="5" fill="#f9f9f9" stroke="#ebebeb"/><path d="M6.5 6.5 H22.5 L29.5 11.5 V28.5 H6.5 Z" fill="#f6f6f6" stroke="#cccccc"/><path d="M22.5 6.5 V11.5 H29.5" fill="#fdfdfd" stroke="#cccccc"/><path d="M10 13.8 V20.4 L13.5 18.6 V20.4 H22.7 V13.8 H13.5 V15.6 Z" fill="#c6c6c6"/><circle cx="24.2" cy="23.1" r="7" fill="#efefef" stroke="#cbcbcb"/><circle cx="25.53" cy="19.44" r="1.6" fill="#c4c4c4"/><circle cx="28.10" cy="23.24" r="1.6" fill="#c4c4c4"/><circle cx="25.27" cy="26.85" r="1.6" fill="#c4c4c4"/><circle cx="20.97" cy="25.28" r="1.6" fill="#c4c4c4"/><circle cx="21.13" cy="20.70" r="1.6" fill="#c4c4c4"/><circle cx="24.2" cy="23.1" r="0.6" fill="#c4c4c4"/></svg></span></div>
<div style="position:absolute;left:712px;top:615px;width:95px;height:52px;line-height:52px;font-size:14px;color:#333;font-weight:normal;text-align:center;white-space:nowrap;">12-53</div>
<div style="position:absolute;left:809px;top:615px;width:131px;height:52px;line-height:52px;font-size:14px;color:#333;font-weight:normal;text-align:center;white-space:nowrap;">百家乐</div>
<div style="position:absolute;left:942px;top:615px;width:81px;height:52px;line-height:52px;font-size:14px;color:#333;font-weight:normal;text-align:center;white-space:nowrap;">AS1</div>
<div style="position:absolute;left:1025px;top:615px;width:150px;height:52px;line-height:52px;font-size:14px;color:#333;font-weight:normal;text-align:center;white-space:nowrap;"><span style="color:#0060ff">闲</span>(9) <span style="color:#f00">庄</span>(5)</div>
<div style="position:absolute;left:1177px;top:615px;width:107px;height:52px;line-height:52px;font-size:14px;color:#0060ff;font-weight:normal;text-align:center;white-space:nowrap;">30.00</div>
<div style="position:absolute;left:1286px;top:615px;width:131px;height:52px;line-height:52px;font-size:14px;color:#333;font-weight:normal;text-align:center;white-space:nowrap;">30.00</div>
<div style="position:absolute;left:1419px;top:615px;width:106px;height:52px;line-height:52px;font-size:14px;color:#f00;font-weight:normal;text-align:center;white-space:nowrap;">-30.00</div>
<div style="position:absolute;left:1527px;top:615px;width:377px;height:52px;line-height:52px;font-size:14px;color:#333;font-weight:normal;text-align:center;white-space:nowrap;">210.00/180.00</div>
<div style="position:absolute;left:280px;top:615px;width:2px;height:52px;background:#ddd;"></div>
<div style="position:absolute;left:480px;top:615px;width:2px;height:52px;background:#ddd;"></div>
<div style="position:absolute;left:710px;top:615px;width:2px;height:52px;background:#ddd;"></div>
<div style="position:absolute;left:807px;top:615px;width:2px;height:52px;background:#ddd;"></div>
<div style="position:absolute;left:940px;top:615px;width:2px;height:52px;background:#ddd;"></div>
<div style="position:absolute;left:1023px;top:615px;width:2px;height:52px;background:#ddd;"></div>
<div style="position:absolute;left:1175px;top:615px;width:2px;height:52px;background:#ddd;"></div>
<div style="position:absolute;left:1284px;top:615px;width:2px;height:52px;background:#ddd;"></div>
<div style="position:absolute;left:1417px;top:615px;width:2px;height:52px;background:#ddd;"></div>
<div style="position:absolute;left:1525px;top:615px;width:2px;height:52px;background:#ddd;"></div>
<div style="position:absolute;left:15px;top:292px;width:1px;height:375px;background:#ddd;"></div>
<div style="position:absolute;left:1904px;top:292px;width:1px;height:375px;background:#ddd;"></div>
<div style="position:absolute;left:16px;top:667px;width:1888px;height:74px;background:#999;border-radius:0 0 3px 3px;box-shadow:0 1px 2px rgba(0,0,0,0.12);"></div>
<div style="position:absolute;left:16px;top:667px;width:1888px;height:1px;background:#8e8e8e;"></div>
<div style="position:absolute;left:15px;top:667px;width:1px;height:72px;background:#f0f0f0;"></div>
<div style="position:absolute;left:1904px;top:667px;width:1px;height:72px;background:#f0f0f0;"></div>
<div style="position:absolute;left:16px;top:703px;width:1888px;height:2px;background:#ddd;"></div>
<div style="position:absolute;left:280px;top:667px;width:2px;height:74px;background:#ddd;"></div>
<div style="position:absolute;left:480px;top:667px;width:2px;height:74px;background:#ddd;"></div>
<div style="position:absolute;left:710px;top:667px;width:2px;height:74px;background:#ddd;"></div>
<div style="position:absolute;left:807px;top:667px;width:2px;height:74px;background:#ddd;"></div>
<div style="position:absolute;left:940px;top:667px;width:2px;height:74px;background:#ddd;"></div>
<div style="position:absolute;left:1023px;top:667px;width:2px;height:74px;background:#ddd;"></div>
<div style="position:absolute;left:1175px;top:667px;width:2px;height:74px;background:#ddd;"></div>
<div style="position:absolute;left:1284px;top:667px;width:2px;height:74px;background:#ddd;"></div>
<div style="position:absolute;left:1417px;top:667px;width:2px;height:74px;background:#ddd;"></div>
<div style="position:absolute;left:1525px;top:667px;width:2px;height:74px;background:#ddd;"></div>
<div style="position:absolute;left:16px;top:667px;width:264px;height:36px;line-height:36px;font-size:14px;color:#fff;font-weight:normal;text-align:center;white-space:nowrap;">小计</div>
<div style="position:absolute;left:282px;top:667px;width:198px;height:36px;line-height:36px;font-size:14px;color:#fff;font-weight:normal;text-align:center;white-space:nowrap;">7</div>
<div style="position:absolute;left:1177px;top:667px;width:107px;height:36px;line-height:36px;font-size:14px;color:#fff;font-weight:normal;text-align:center;white-space:nowrap;">210.00</div>
<div style="position:absolute;left:1286px;top:667px;width:131px;height:36px;line-height:36px;font-size:14px;color:#fff;font-weight:normal;text-align:center;white-space:nowrap;">210.00</div>
<div style="position:absolute;left:1419px;top:667px;width:106px;height:36px;line-height:36px;font-size:14px;color:#f00;font-weight:normal;text-align:center;white-space:nowrap;">-33.00</div>
<div style="position:absolute;left:16px;top:705px;width:264px;height:36px;line-height:36px;font-size:14px;color:#fff;font-weight:normal;text-align:center;white-space:nowrap;">总计</div>
<div style="position:absolute;left:282px;top:705px;width:198px;height:36px;line-height:36px;font-size:14px;color:#fff;font-weight:normal;text-align:center;white-space:nowrap;">7</div>
<div style="position:absolute;left:1177px;top:705px;width:107px;height:36px;line-height:36px;font-size:14px;color:#fff;font-weight:normal;text-align:center;white-space:nowrap;">210.00</div>
<div style="position:absolute;left:1286px;top:705px;width:131px;height:36px;line-height:36px;font-size:14px;color:#fff;font-weight:normal;text-align:center;white-space:nowrap;">210.00</div>
<div style="position:absolute;left:1419px;top:705px;width:106px;height:36px;line-height:36px;font-size:14px;color:#f00;font-weight:normal;text-align:center;white-space:nowrap;">-33.00</div>
<div style="position:absolute;left:710px;top:115px;width:488px;height:190px;border:1px solid #c8c8c8;background:#fff;"></div>
<div style="position:absolute;left:741px;top:137px;width:440px;line-height:32px;font-size:25px;color:#000;white-space:nowrap;">需要使用新应用以打开此 <span style="letter-spacing:0.6px">asus-</span><br><span style="letter-spacing:1.35px">support</span> 链接</div>
<div style="position:absolute;left:919px;top:236px;width:250px;height:40px;background:#e9e9e9;"></div>
<div style="position:absolute;left:919px;top:238px;width:250px;height:40px;line-height:40px;font-size:18px;color:#969696;font-weight:bold;text-align:center;white-space:nowrap;">确定</div>
</body></html>
